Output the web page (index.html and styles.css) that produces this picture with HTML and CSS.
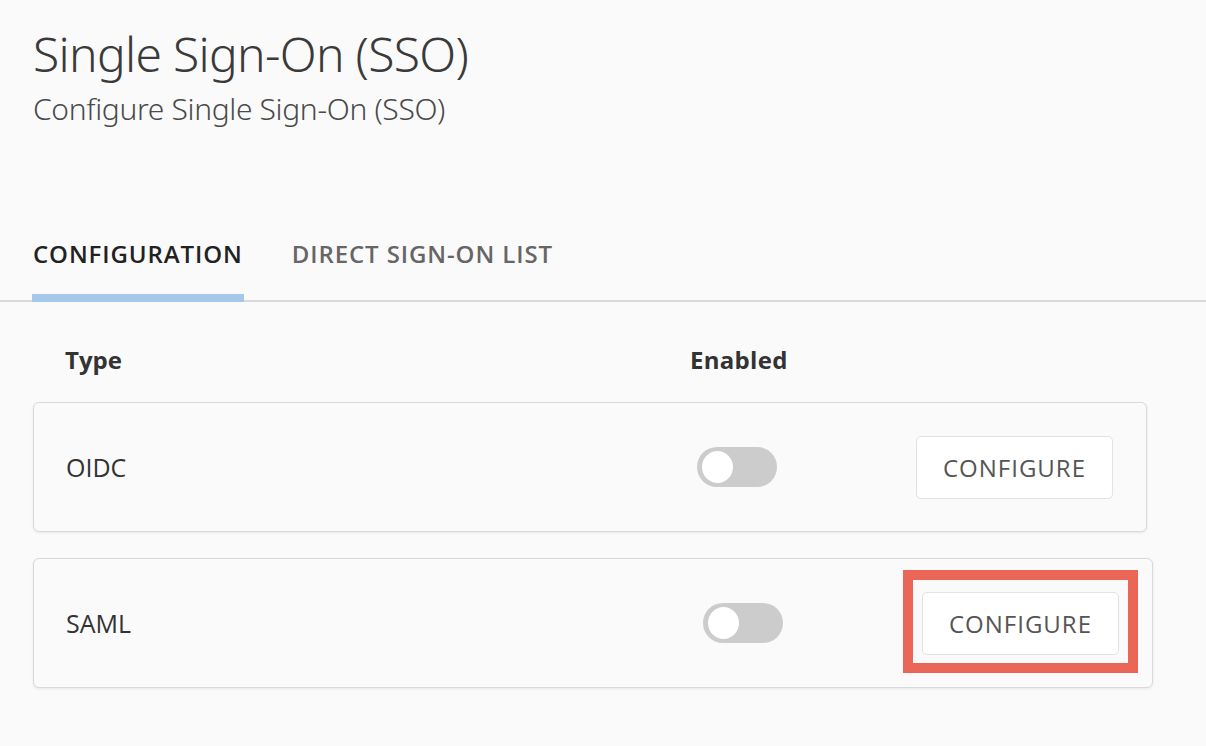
FILE: index.html
```html
<!DOCTYPE html>
<html lang="en">
<head>
<meta charset="utf-8">
<title>Single Sign-On (SSO)</title>
<link rel="stylesheet" href="styles.css">
</head>
<body>
  <header class="page-head">
    <h1 class="title">Single Sign-On (SSO)</h1>
    <p class="subtitle">Configure Single Sign-On (SSO)</p>
  </header>
  <nav class="tabs">
    <span class="tab tab-active">CONFIGURATION</span>
    <span class="tab">DIRECT SIGN-ON LIST</span>
  </nav>
  <section class="list">
    <div class="list-head">
      <span class="col-type">Type</span>
      <span class="col-enabled">Enabled</span>
    </div>
    <div class="card">
      <span class="col-type">OIDC</span>
      <span class="toggle"><span class="knob"></span></span>
      <span class="btn-wrap"><button class="btn">CONFIGURE</button></span>
    </div>
    <div class="card card-wide">
      <span class="col-type">SAML</span>
      <span class="toggle"><span class="knob"></span></span>
      <span class="btn-wrap highlight"><button class="btn">CONFIGURE</button></span>
    </div>
  </section>
</body>
</html>
```
FILE: styles.css
```css
html, body {
  margin: 0;
  padding: 0;
  background: #fafafa;
}
body {
  font-family: "Open Sans", "Noto Sans", "Liberation Sans", sans-serif;
  color: #333;
  width: 1206px;
  height: 746px;
  overflow: hidden;
}
.page-head {
  padding: 26px 0 0 33px;
  font-family: "Noto Sans", "Open Sans", sans-serif;
}
.title {
  margin: 0;
  font-size: 48px;
  line-height: 56px;
  font-weight: 300;
  letter-spacing: -0.7px;
  color: #3a3a3a;
}
.subtitle {
  margin: 9px 0 0;
  font-size: 30px;
  line-height: 36px;
  font-weight: 300;
  letter-spacing: -0.35px;
  color: #4a4a4a;
}
.tabs {
  display: flex;
  gap: 47px;
  margin-top: 111px;
  padding-left: 32px;
  border-bottom: 2px solid #d9d9d9;
}
.tab {
  font-size: 24px;
  line-height: 32px;
  font-weight: 600;
  letter-spacing: 0.9px;
  color: #666;
  padding: 0 1px 24px 1px;
  border-bottom: 8px solid transparent;
  margin-bottom: -2px;
}
.tab-active {
  color: #222;
  border-bottom-color: #a6c9ea;
}
.list {
  width: 1114px;
  margin: 42px 0 0 33px;
}
.list-head {
  display: flex;
  align-items: center;
  padding: 0 0 0 32px;
  height: 32px;
  font-size: 24px;
  line-height: 32px;
  font-weight: 700;
  color: #333;
  margin-bottom: 26px;
}
.col-type {
  flex: 1;
}
.col-enabled {
  width: 100px;
  margin-right: 357px;
  white-space: nowrap;
  letter-spacing: 0.3px;
}
.card {
  display: flex;
  align-items: center;
  height: 128px;
  padding: 0 33px 0 32px;
  border: 1px solid #d9d9d9;
  border-radius: 6px;
  background: #fafafa;
  box-shadow: 0 1px 3px rgba(0, 0, 0, 0.08);
  margin-bottom: 26px;
  font-size: 25px;
  color: #333;
}
.card-wide {
  margin-right: -6px;
}
.toggle {
  position: relative;
  width: 80px;
  height: 40px;
  border-radius: 20px;
  background: #cccccc;
  margin-right: 139px;
}
.knob {
  position: absolute;
  left: 5px;
  top: 4px;
  width: 31px;
  height: 32px;
  border-radius: 50%;
  background: #fff;
}
.btn-wrap {
  display: flex;
}
.btn {
  width: 197px;
  height: 63px;
  border: 1.5px solid #e2e2e2;
  border-radius: 5px;
  background: #fff;
  font-family: "Open Sans", "Noto Sans", "Liberation Sans", sans-serif;
  font-size: 24px;
  letter-spacing: 1px;
  color: #555;
  padding: 0;
}
.highlight {
  position: relative;
}
.highlight::before {
  content: "";
  position: absolute;
  left: -19px;
  top: -22px;
  right: -19px;
  bottom: -18px;
  border: 10px solid #ea6656;
  pointer-events: none;
}
```
